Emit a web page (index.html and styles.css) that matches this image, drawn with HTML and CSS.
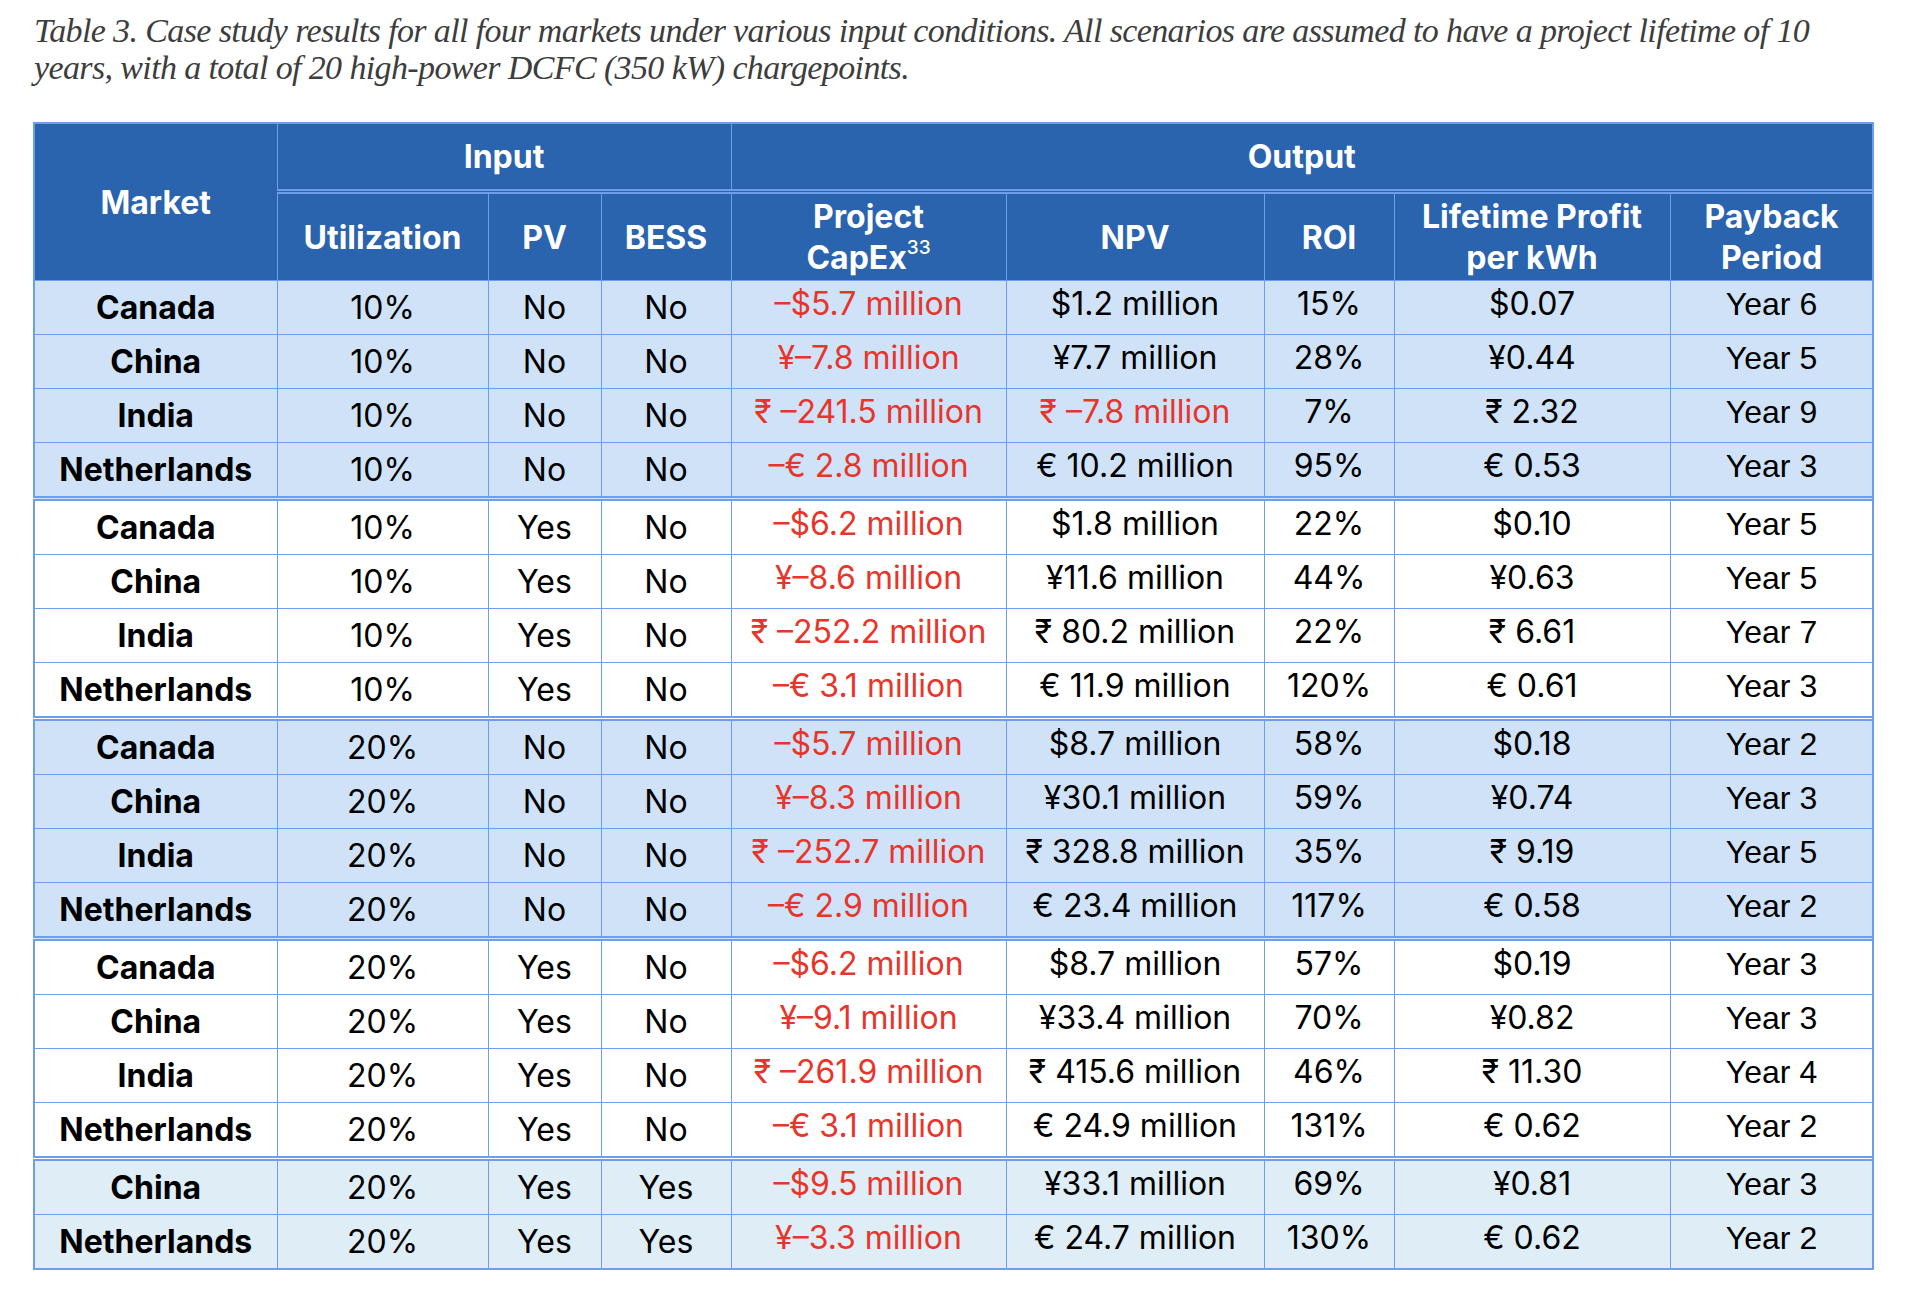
FILE: index.html
```html
<!DOCTYPE html>
<html lang="en">
<head>
<meta charset="utf-8">
<title>Table 3</title>
<link rel="stylesheet" href="styles.css">
</head>
<body>
<div class="page">
  <p class="caption">Table 3. Case study results for all four markets under various input conditions. All scenarios are assumed to have a project lifetime of 10 years, with a total of 20 high-power DCFC (350 kW) chargepoints.</p>
  <table class="results">
    <colgroup>
      <col class="c-market"><col class="c-util"><col class="c-pv"><col class="c-bess"><col class="c-capex"><col class="c-npv"><col class="c-roi"><col class="c-profit"><col class="c-payback">
    </colgroup>
    <thead>
      <tr class="h1">
        <th rowspan="2" class="market-h">Market</th>
        <th colspan="3">Input</th>
        <th colspan="6">Output</th>
      </tr>
      <tr class="h2">
        <th>Utilization</th><th>PV</th><th>BESS</th>
        <th class="out">Project<br>CapEx<sup>33</sup></th><th>NPV</th><th>ROI</th><th class="out">Lifetime Profit<br>per kWh</th><th class="out">Payback<br>Period</th>
      </tr>
    </thead>
    <tbody class="g-blue">
      <tr><td class="m">Canada</td><td>10%</td><td>No</td><td>No</td><td class="o neg">–$5.7 million</td><td class="o">$1.2 million</td><td class="o">15%</td><td class="o">$0.07</td><td class="o y">Year 6</td></tr>
      <tr><td class="m">China</td><td>10%</td><td>No</td><td>No</td><td class="o neg">¥–7.8 million</td><td class="o">¥7.7 million</td><td class="o">28%</td><td class="o">¥0.44</td><td class="o y">Year 5</td></tr>
      <tr><td class="m">India</td><td>10%</td><td>No</td><td>No</td><td class="o neg">₹ –241.5 million</td><td class="o neg">₹ –7.8 million</td><td class="o">7%</td><td class="o">₹ 2.32</td><td class="o y">Year 9</td></tr>
      <tr><td class="m">Netherlands</td><td>10%</td><td>No</td><td>No</td><td class="o neg">–€ 2.8 million</td><td class="o">€ 10.2 million</td><td class="o">95%</td><td class="o">€ 0.53</td><td class="o y">Year 3</td></tr>
    </tbody>
    <tbody class="g-white">
      <tr><td class="m">Canada</td><td>10%</td><td>Yes</td><td>No</td><td class="o neg">–$6.2 million</td><td class="o">$1.8 million</td><td class="o">22%</td><td class="o">$0.10</td><td class="o y">Year 5</td></tr>
      <tr><td class="m">China</td><td>10%</td><td>Yes</td><td>No</td><td class="o neg">¥–8.6 million</td><td class="o">¥11.6 million</td><td class="o">44%</td><td class="o">¥0.63</td><td class="o y">Year 5</td></tr>
      <tr><td class="m">India</td><td>10%</td><td>Yes</td><td>No</td><td class="o neg">₹ –252.2 million</td><td class="o">₹ 80.2 million</td><td class="o">22%</td><td class="o">₹ 6.61</td><td class="o y">Year 7</td></tr>
      <tr><td class="m">Netherlands</td><td>10%</td><td>Yes</td><td>No</td><td class="o neg">–€ 3.1 million</td><td class="o">€ 11.9 million</td><td class="o">120%</td><td class="o">€ 0.61</td><td class="o y">Year 3</td></tr>
    </tbody>
    <tbody class="g-blue">
      <tr><td class="m">Canada</td><td>20%</td><td>No</td><td>No</td><td class="o neg">–$5.7 million</td><td class="o">$8.7 million</td><td class="o">58%</td><td class="o">$0.18</td><td class="o y">Year 2</td></tr>
      <tr><td class="m">China</td><td>20%</td><td>No</td><td>No</td><td class="o neg">¥–8.3 million</td><td class="o">¥30.1 million</td><td class="o">59%</td><td class="o">¥0.74</td><td class="o y">Year 3</td></tr>
      <tr><td class="m">India</td><td>20%</td><td>No</td><td>No</td><td class="o neg">₹ –252.7 million</td><td class="o">₹ 328.8 million</td><td class="o">35%</td><td class="o">₹ 9.19</td><td class="o y">Year 5</td></tr>
      <tr><td class="m">Netherlands</td><td>20%</td><td>No</td><td>No</td><td class="o neg">–€ 2.9 million</td><td class="o">€ 23.4 million</td><td class="o">117%</td><td class="o">€ 0.58</td><td class="o y">Year 2</td></tr>
    </tbody>
    <tbody class="g-white">
      <tr><td class="m">Canada</td><td>20%</td><td>Yes</td><td>No</td><td class="o neg">–$6.2 million</td><td class="o">$8.7 million</td><td class="o">57%</td><td class="o">$0.19</td><td class="o y">Year 3</td></tr>
      <tr><td class="m">China</td><td>20%</td><td>Yes</td><td>No</td><td class="o neg">¥–9.1 million</td><td class="o">¥33.4 million</td><td class="o">70%</td><td class="o">¥0.82</td><td class="o y">Year 3</td></tr>
      <tr><td class="m">India</td><td>20%</td><td>Yes</td><td>No</td><td class="o neg">₹ –261.9 million</td><td class="o">₹ 415.6 million</td><td class="o">46%</td><td class="o">₹ 11.30</td><td class="o y">Year 4</td></tr>
      <tr><td class="m">Netherlands</td><td>20%</td><td>Yes</td><td>No</td><td class="o neg">–€ 3.1 million</td><td class="o">€ 24.9 million</td><td class="o">131%</td><td class="o">€ 0.62</td><td class="o y">Year 2</td></tr>
    </tbody>
    <tbody class="g-grey">
      <tr><td class="m">China</td><td>20%</td><td>Yes</td><td>Yes</td><td class="o neg">–$9.5 million</td><td class="o">¥33.1 million</td><td class="o">69%</td><td class="o">¥0.81</td><td class="o y">Year 3</td></tr>
      <tr><td class="m">Netherlands</td><td>20%</td><td>Yes</td><td>Yes</td><td class="o neg">¥–3.3 million</td><td class="o">€ 24.7 million</td><td class="o">130%</td><td class="o">€ 0.62</td><td class="o y">Year 2</td></tr>
    </tbody>
  </table>
</div>
</body>
</html>
```

FILE: styles.css
```css
html, body {
  margin: 0;
  padding: 0;
  background: #ffffff;
}

.page {
  padding: 12px 38px 0 33px;
}

.caption {
  margin: 0 0 0 1px;
  font-family: "Liberation Serif", "Times New Roman", serif;
  font-style: italic;
  font-size: 34px;
  line-height: 37px;
  color: #3d3d3d;
  letter-spacing: -0.62px;
  max-width: 1815px;
}

.results {
  margin-top: 36px;
  width: 1839px;
  table-layout: fixed;
  border-collapse: collapse;
  border: 2px solid #6d9eeb;
  font-family: Inter, "Noto Sans", sans-serif;
  font-size: 32px;
  color: #000000;
}

.c-market { width: 243px; }
.c-util { width: 211px; }
.c-pv { width: 113px; }
.c-bess { width: 130px; }
.c-capex { width: 275px; }
.c-npv { width: 258px; }
.c-roi { width: 130px; }
.c-profit { width: 276px; }
.c-payback { width: 203px; }

.results th,
.results td {
  border: 1px solid #6d9eeb;
  padding: 0;
  text-align: center;
  vertical-align: middle;
  white-space: nowrap;
}

.results th {
  background: #2a63ae;
  color: #ffffff;
  font-weight: 700;
  line-height: 41px;
}

.h1 th {
  height: 65px;
}

.h2 th {
  height: 86px;
  border-top: 5px double #6d9eeb;
}

.results sup {
  font-size: 19px;
  font-weight: 500;
  vertical-align: 15px;
  line-height: 0;
}

.results td {
  height: 53px;
  line-height: 36px;
}

.results td.m {
  font-weight: 700;
}

.results td.o {
  padding-bottom: 8px;
  height: 45px;
}

.results td.y {
  font-family: "Liberation Sans", Arial, sans-serif;
  font-size: 32px;
}

.results td.neg {
  color: #e8352b;
}

.results tbody + tbody tr:first-child td {
  border-top: 5px double #6d9eeb;
}

.g-blue td { background: #cfe2f8; }
.g-white td { background: #ffffff; }
.g-grey td { background: #deedf6; }
```
